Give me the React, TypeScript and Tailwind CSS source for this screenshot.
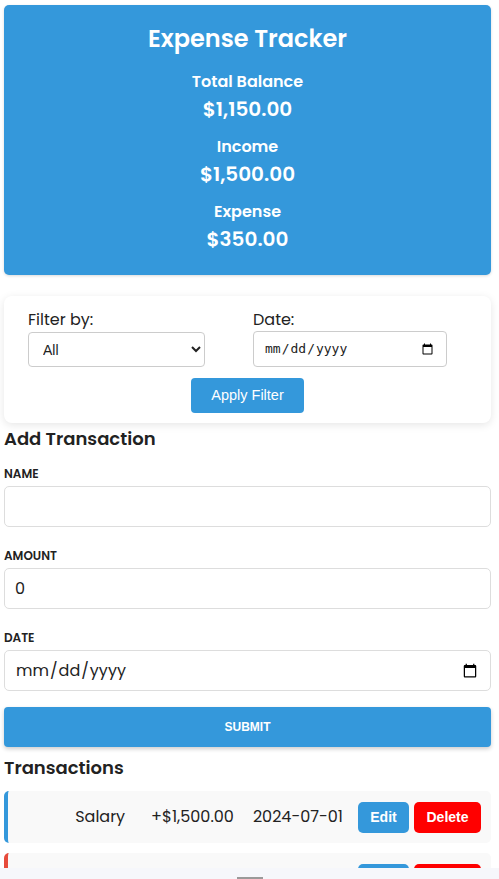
import React from "react";

const font = { fontFamily: "Poppins, 'Noto Sans', sans-serif" };
const arial = { fontFamily: "'Liberation Sans', Arial, sans-serif" };

interface Txn {
  name: string;
  amount: string;
  date: string;
  kind: "income" | "expense";
}

const transactions: Txn[] = [
  { name: "Salary", amount: "+$1,500.00", date: "2024-07-01", kind: "income" },
  { name: "Groceries", amount: "-$350.00", date: "2024-07-03", kind: "expense" },
];

function Summary({ label, value }: { label: string; value: string }) {
  return (
    <div className="flex flex-col items-center">
      <h3 className="text-[16px] font-semibold leading-[24px]">{label}</h3>
      <p className="text-[20px] font-semibold leading-[30px]">{value}</p>
    </div>
  );
}

function Field({ label, className, children }: { label: string; className?: string; children: React.ReactNode }) {
  return (
    <div className={"flex flex-col " + (className ?? "")}>
      <label className="text-[12px] font-semibold uppercase text-[#222] leading-[16px] mb-[4px]">{label}</label>
      {children}
    </div>
  );
}

export default function App() {
  return (
    <div className="min-h-screen bg-white text-[#222] pl-[4px] pr-[8px] pt-[5px]" style={font}>
      <header className="bg-[#3498db] text-white rounded-[5px] shadow-[0_1px_3px_rgba(0,0,0,0.15)] pt-[17px] pb-[21px] flex flex-col items-center">
        <h1 className="text-[24px] font-semibold leading-[34px] mb-[14px]">Expense Tracker</h1>
        <div className="flex flex-col gap-[11px]">
          <Summary label="Total Balance" value="$1,150.00" />
          <Summary label="Income" value="$1,500.00" />
          <Summary label="Expense" value="$350.00" />
        </div>
      </header>

      <section className="mt-[21px] bg-white rounded-[8px] shadow-[0_2px_8px_rgba(0,0,0,0.1)] px-[24px] pt-[12px] pb-[10px]">
        <div className="flex gap-[48px]">
          <div className="flex flex-col w-[177px]">
            <label className="text-[16px] leading-[24px] text-[#222]">Filter by:</label>
            <select
              className="h-[35px] border border-[#ccc] rounded-[4px] px-[10px] text-[14px] bg-white"
              style={arial}
              defaultValue="all"
            >
              <option value="all">All</option>
              <option value="income">Income</option>
              <option value="expense">Expense</option>
            </select>
          </div>
          <div className="flex flex-col w-[194px]">
            <label className="text-[16px] leading-[24px] text-[#222]">Date:</label>
            <input
              type="date"
              className="-mt-[1px] h-[36px] border border-[#ccc] rounded-[4px] px-[10px] text-[13px] bg-white"
              style={{ fontFamily: "'DejaVu Sans Mono', monospace" }}
            />
          </div>
        </div>
        <div className="flex justify-center mt-[11px]">
          <button className="bg-[#3498db] text-white text-[14.5px] rounded-[4px] w-[113px] h-[35px]" style={arial}>
            Apply Filter
          </button>
        </div>
      </section>

      <h2 className="text-[18px] font-semibold leading-[28px] mt-[2px]">Add Transaction</h2>
      <form className="flex flex-col mt-[13px]" onSubmit={(e) => e.preventDefault()}>
        <Field label="Name">
          <input type="text" className="h-[41px] border border-[#ddd] rounded-[5px] px-[10px] text-[16px]" />
        </Field>
        <Field label="Amount" className="mt-[21px]">
          <input type="number" defaultValue={0} className="h-[41px] border border-[#ddd] rounded-[5px] px-[10px] text-[16px]" />
        </Field>
        <Field label="Date" className="mt-[21px]">
          <input type="date" className="h-[41px] border border-[#ddd] rounded-[5px] px-[10px] text-[16px]" style={font} />
        </Field>
        <button
          type="submit"
          className="mt-[16px] h-[40px] bg-[#3498db] text-white text-[12px] font-bold uppercase rounded-[4px] shadow-[0_2px_4px_rgba(0,0,0,0.2)]"
          style={arial}
        >
          Submit
        </button>
      </form>

      <h2 className="text-[18px] font-semibold leading-[28px] mt-[7px]">Transactions</h2>
      <ul className="flex flex-col gap-[10px] mt-[9px]">
        {transactions.map((t) => (
          <li
            key={t.name}
            className={
              "flex items-center justify-end h-[52px] bg-[#f9f9f9] rounded-[5px] border-l-[4px] pr-[10px] text-[16px] text-[#222] " +
              (t.kind === "income" ? "border-[#3498db]" : "border-[#e74c3c]")
            }
          >
            <span>{t.name}</span>
            <span className="ml-[26px]">{t.amount}</span>
            <span className="ml-[19px]">{t.date}</span>
            <button className="ml-[15px] bg-[#3498db] text-white font-bold text-[14px] rounded-[5px] w-[51px] h-[31px]" style={arial}>
              Edit
            </button>
            <button className="ml-[5px] bg-[#ff0000] text-white font-bold text-[14px] rounded-[5px] w-[67px] h-[31px]" style={arial}>
              Delete
            </button>
          </li>
        ))}
      </ul>

      <div className="fixed bottom-0 left-0 right-0 h-[11px] bg-[#f6f7fb] flex justify-center items-end">
        <div className="w-[26px] h-[2px] bg-[#9a9a9a]" />
      </div>
    </div>
  );
}
